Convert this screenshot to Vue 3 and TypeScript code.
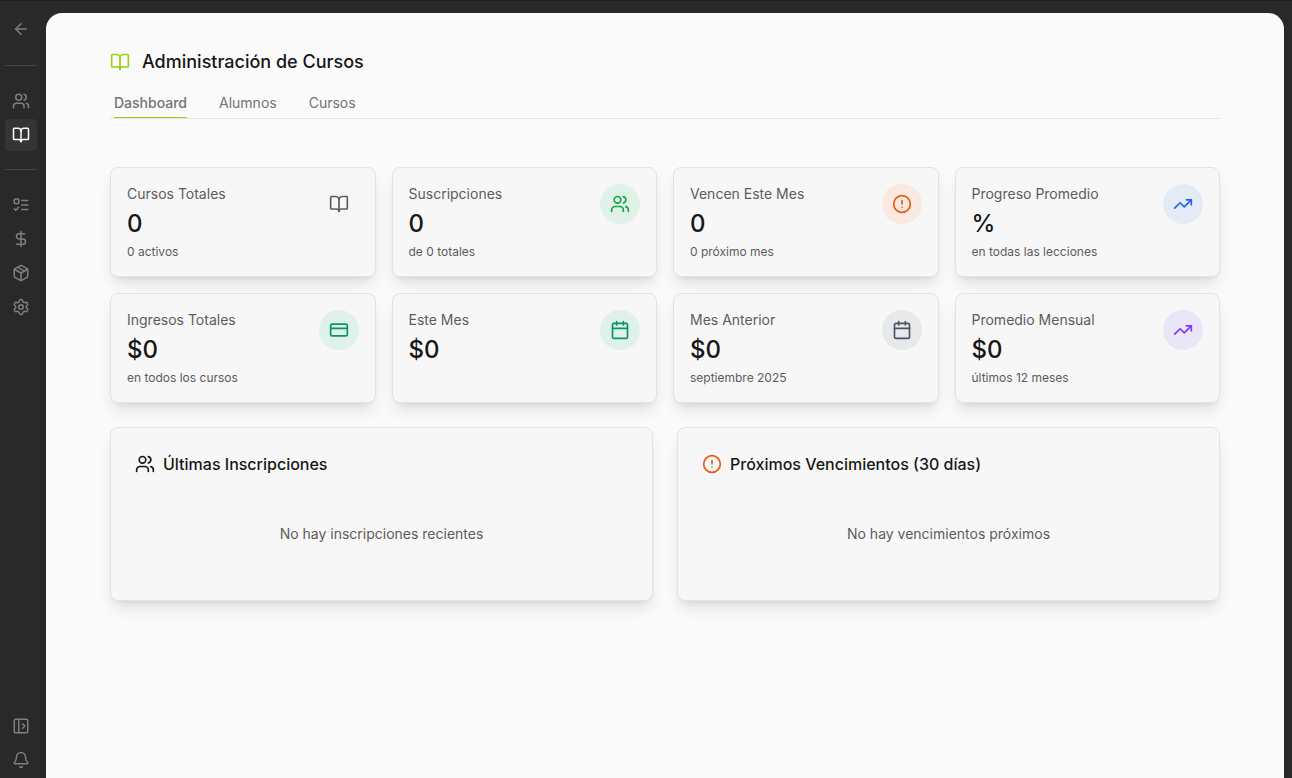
<script setup lang="ts">
import { computed, defineComponent, h, ref } from 'vue'

type IconName =
  | 'arrow' | 'users' | 'book' | 'list' | 'dollar' | 'box' | 'gear' | 'panel'
  | 'bell' | 'alert' | 'trend' | 'card' | 'calendar'

const shapes: Record<IconName, string[]> = {
  arrow: ['m12 19-7-7 7-7', 'M19 12H5'],
  users: [
    'M16 21v-2a4 4 0 0 0-4-4H6a4 4 0 0 0-4 4v2',
    'M16 3.128a4 4 0 0 1 0 7.744',
    'M22 21v-2a4 4 0 0 0-3-3.87',
    'M5 7a4 4 0 1 0 8 0a4 4 0 1 0-8 0',
  ],
  book: [
    'M12 7v14',
    'M3 18a1 1 0 0 1-1-1V4a1 1 0 0 1 1-1h5a4 4 0 0 1 4 4 4 4 0 0 1 4-4h5a1 1 0 0 1 1 1v13a1 1 0 0 1-1 1h-6a3 3 0 0 0-3 3 3 3 0 0 0-3-3z',
  ],
  list: [
    'M4 4h4a1 1 0 0 1 1 1v4a1 1 0 0 1-1 1H4a1 1 0 0 1-1-1V5a1 1 0 0 1 1-1z',
    'm3 17 2 2 4-4', 'M13 6h8', 'M13 12h8', 'M13 18h8',
  ],
  dollar: ['M12 2v20', 'M17 5H9.5a3.5 3.5 0 0 0 0 7h5a3.5 3.5 0 0 1 0 7H6'],
  box: [
    'M11 21.73a2 2 0 0 0 2 0l7-4A2 2 0 0 0 21 16V8a2 2 0 0 0-1-1.73l-7-4a2 2 0 0 0-2 0l-7 4A2 2 0 0 0 3 8v8a2 2 0 0 0 1 1.73z',
    'M12 22V12', 'M3.29 7 12 12l8.71-5', 'm7.5 4.27 9 5.15',
  ],
  gear: [
    'M9.671 4.136a2.34 2.34 0 0 1 4.659 0 2.34 2.34 0 0 0 3.319 1.915 2.34 2.34 0 0 1 2.33 4.033 2.34 2.34 0 0 0 0 3.831 2.34 2.34 0 0 1-2.33 4.033 2.34 2.34 0 0 0-3.319 1.915 2.34 2.34 0 0 1-4.659 0 2.34 2.34 0 0 0-3.32-1.915 2.34 2.34 0 0 1-2.33-4.033 2.34 2.34 0 0 0 0-3.831A2.34 2.34 0 0 1 6.35 6.051a2.34 2.34 0 0 0 3.319-1.915',
    'M9 12a3 3 0 1 0 6 0a3 3 0 1 0-6 0',
  ],
  panel: [
    'M5 3h14a2 2 0 0 1 2 2v14a2 2 0 0 1-2 2H5a2 2 0 0 1-2-2V5a2 2 0 0 1 2-2z',
    'M9 3v18', 'm14 9 3 3-3 3',
  ],
  bell: [
    'M10.268 21a2 2 0 0 0 3.464 0',
    'M3.262 15.326A1 1 0 0 0 4 17h16a1 1 0 0 0 .74-1.673C19.41 13.956 18 12.499 18 8A6 6 0 0 0 6 8c0 4.499-1.411 5.956-2.738 7.326',
  ],
  alert: ['M2 12a10 10 0 1 0 20 0a10 10 0 1 0-20 0', 'M12 8v4', 'M12 16h.01'],
  trend: ['M16 7h6v6', 'm22 7-8.5 8.5-5-5L2 17'],
  card: [
    'M4 5h16a2 2 0 0 1 2 2v10a2 2 0 0 1-2 2H4a2 2 0 0 1-2-2V7a2 2 0 0 1 2-2z',
    'M2 10h20',
  ],
  calendar: [
    'M8 2v4', 'M16 2v4',
    'M5 4h14a2 2 0 0 1 2 2v14a2 2 0 0 1-2 2H5a2 2 0 0 1-2-2V6a2 2 0 0 1 2-2z',
    'M3 10h18',
  ],
}

const Icon = defineComponent({
  props: { name: { type: String, required: true }, size: { type: Number, default: 20 } },
  setup(props) {
    return () =>
      h(
        'svg',
        {
          width: props.size, height: props.size, viewBox: '0 0 24 24', fill: 'none',
          stroke: 'currentColor', 'stroke-width': 2, 'stroke-linecap': 'round',
          'stroke-linejoin': 'round', 'aria-hidden': 'true',
        },
        shapes[props.name as IconName].map((d) => h('path', { d })),
      )
  },
})

interface NavItem { icon: IconName; label: string }
const people: NavItem[] = [
  { icon: 'users', label: 'Usuarios' },
  { icon: 'book', label: 'Cursos' },
]
const tools: NavItem[] = [
  { icon: 'list', label: 'Tareas' },
  { icon: 'dollar', label: 'Pagos' },
  { icon: 'box', label: 'Productos' },
  { icon: 'gear', label: 'Ajustes' },
]
const current = ref<IconName>('book')

const tabs = ['Dashboard', 'Alumnos', 'Cursos']
const activeTab = ref('Dashboard')

interface Stat { label: string; value: string; note?: string; icon: IconName; tone: string }
const total = ref(0)
const stats = computed<Stat[]>(() => [
  { label: 'Cursos Totales', value: `${total.value}`, note: '0 activos', icon: 'book', tone: 'plain' },
  { label: 'Suscripciones', value: '0', note: 'de 0 totales', icon: 'users', tone: 'green' },
  { label: 'Vencen Este Mes', value: '0', note: '0 próximo mes', icon: 'alert', tone: 'orange' },
  { label: 'Progreso Promedio', value: '%', note: 'en todas las lecciones', icon: 'trend', tone: 'blue' },
  { label: 'Ingresos Totales', value: '$0', note: 'en todos los cursos', icon: 'card', tone: 'emerald' },
  { label: 'Este Mes', value: '$0', icon: 'calendar', tone: 'emerald' },
  { label: 'Mes Anterior', value: '$0', note: 'septiembre 2025', icon: 'calendar', tone: 'slate' },
  { label: 'Promedio Mensual', value: '$0', note: 'últimos 12 meses', icon: 'trend', tone: 'violet' },
])
</script>

<template>
  <div class="shell">
    <aside class="sidebar">
      <button class="nav-btn" type="button" aria-label="Volver"><Icon name="arrow" :size="18" /></button>
      <hr class="divider" />
      <nav class="group" aria-label="Secciones">
        <button
          v-for="item in people" :key="item.icon" type="button" class="nav-btn"
          :class="{ active: current === item.icon }" :aria-label="item.label" @click="current = item.icon"
        ><Icon :name="item.icon" :size="18" /></button>
      </nav>
      <hr class="divider" />
      <nav class="group" aria-label="Herramientas">
        <button
          v-for="item in tools" :key="item.icon" type="button" class="nav-btn"
          :class="{ active: current === item.icon }" :aria-label="item.label" @click="current = item.icon"
        ><Icon :name="item.icon" :size="18" /></button>
      </nav>
      <div class="group bottom">
        <button class="nav-btn" type="button" aria-label="Expandir panel"><Icon name="panel" :size="18" /></button>
        <button class="nav-btn" type="button" aria-label="Notificaciones"><Icon name="bell" :size="18" /></button>
      </div>
    </aside>

    <main class="content">
      <header class="heading">
        <Icon name="book" class="lime" />
        <h1>Administración de Cursos</h1>
      </header>

      <div class="tabs" role="tablist">
        <button
          v-for="tab in tabs" :key="tab" type="button" role="tab" class="tab"
          :class="{ selected: activeTab === tab }" :aria-selected="activeTab === tab" @click="activeTab = tab"
        >{{ tab }}</button>
      </div>

      <section class="stats">
        <article v-for="stat in stats" :key="stat.label" class="box stat">
          <div class="stat-text">
            <p class="label">{{ stat.label }}</p>
            <p class="value">{{ stat.value }}</p>
            <p v-if="stat.note" class="note">{{ stat.note }}</p>
          </div>
          <span class="badge" :class="stat.tone"><Icon :name="stat.icon" /></span>
        </article>
      </section>

      <section class="panels">
        <article class="box panel">
          <h2><Icon name="users" />Últimas Inscripciones</h2>
          <p class="empty">No hay inscripciones recientes</p>
        </article>
        <article class="box panel">
          <h2><Icon name="alert" class="warn" />Próximos Vencimientos (30 días)</h2>
          <p class="empty">No hay vencimientos próximos</p>
        </article>
      </section>
    </main>
  </div>
</template>

<style>
body {
  margin: 0;
  background: #292929;
}
</style>

<style scoped>
.shell {
  box-sizing: border-box;
  display: flex;
  height: 100vh;
  border-top: 1px solid #1b1e29;
  background: #292929;
  color: #171717;
  font-family: Inter, "Noto Sans", sans-serif;
  overflow: hidden;
}
.shell svg {
  display: block;
  flex: none;
}
h1, h2, p {
  margin: 0;
}
button {
  border: 0;
  padding: 0;
  background: none;
  font: inherit;
  color: inherit;
  cursor: pointer;
}
.sidebar {
  box-sizing: border-box;
  display: flex;
  flex: none;
  flex-direction: column;
  width: 46px;
  padding: 12px 9px 2px 5px;
}
.nav-btn {
  display: flex;
  align-items: center;
  justify-content: center;
  width: 32px;
  height: 32px;
  border-radius: 4px;
  color: #7f7f7f;
}
.nav-btn.active {
  background: #343434;
  color: #fafafa;
}
.divider {
  width: 32px;
  height: 1px;
  margin: 20px 0 19px;
  border: 0;
  background: #444444;
}
.group {
  display: flex;
  flex-direction: column;
  gap: 2px;
}
.group + .divider {
  margin: 18px 0 19px;
}
.bottom {
  margin-top: auto;
}
.content {
  box-sizing: border-box;
  flex: 1;
  min-width: 0;
  margin: 12px 8px 0 0;
  padding: 36px 64px;
  border-radius: 16px 16px 0 0;
  background: #fafafa;
}
.heading {
  display: flex;
  align-items: center;
  gap: 12px;
}
.heading h1 {
  font-size: 18px;
  line-height: 26px;
  font-weight: 500;
}
.lime {
  color: #9ad112;
}
.tabs {
  display: flex;
  gap: 32px;
  margin: 14px 0 48px;
  padding: 0 4px;
  border-bottom: 1px solid #e3e3e3;
}
.tab {
  padding: 4px 0;
  border-bottom: 1px solid transparent;
  color: #737373;
  font-size: 14px;
  line-height: 20px;
}
.tab.selected {
  border-bottom-color: #9ad112;
  font-weight: 500;
}
.box {
  box-sizing: border-box;
  border: 1px solid #e3e3e3;
  border-radius: 8px;
  background: #f7f7f7;
  box-shadow: 0 10px 15px -3px rgba(0, 0, 0, 0.1), 0 4px 6px -4px rgba(0, 0, 0, 0.1);
}
.stats {
  display: grid;
  grid-template-columns: repeat(4, minmax(0, 1fr));
  gap: 16px;
}
.stat {
  display: flex;
  align-items: flex-start;
  justify-content: space-between;
  padding: 16px;
}
.stat-text {
  display: flex;
  flex-direction: column;
  gap: 4px;
}
.label {
  color: #5c5c5c;
  font-size: 14px;
  line-height: 20px;
}
.value {
  font-size: 24px;
  line-height: 32px;
  font-weight: 500;
}
.note {
  color: #5c5c5c;
  font-size: 12px;
  line-height: 16px;
}
.badge {
  display: flex;
  align-items: center;
  justify-content: center;
  width: 40px;
  height: 40px;
  border-radius: 50%;
}
.plain {
  color: #5c5c5c;
}
.green {
  background: #e0f2e7;
  color: #16a34a;
}
.orange {
  background: #f8eae0;
  color: #ea580c;
}
.blue {
  background: #e4ebf7;
  color: #2563eb;
}
.emerald {
  background: #e0f1eb;
  color: #059669;
}
.slate {
  background: #e8e9eb;
  color: #4b5563;
}
.violet {
  background: #ebe6f7;
  color: #7c3aed;
}
.panels {
  display: grid;
  grid-template-columns: repeat(2, minmax(0, 1fr));
  gap: 24px;
  margin-top: 24px;
}
.panel {
  padding: 24px;
}
.panel h2 {
  display: flex;
  align-items: center;
  gap: 8px;
  font-size: 16px;
  line-height: 24px;
  font-weight: 500;
}
.warn {
  color: #ea580c;
}
.empty {
  margin-top: 16px;
  padding: 32px 0;
  color: #5c5c5c;
  font-size: 14px;
  line-height: 20px;
  text-align: center;
}
</style>
